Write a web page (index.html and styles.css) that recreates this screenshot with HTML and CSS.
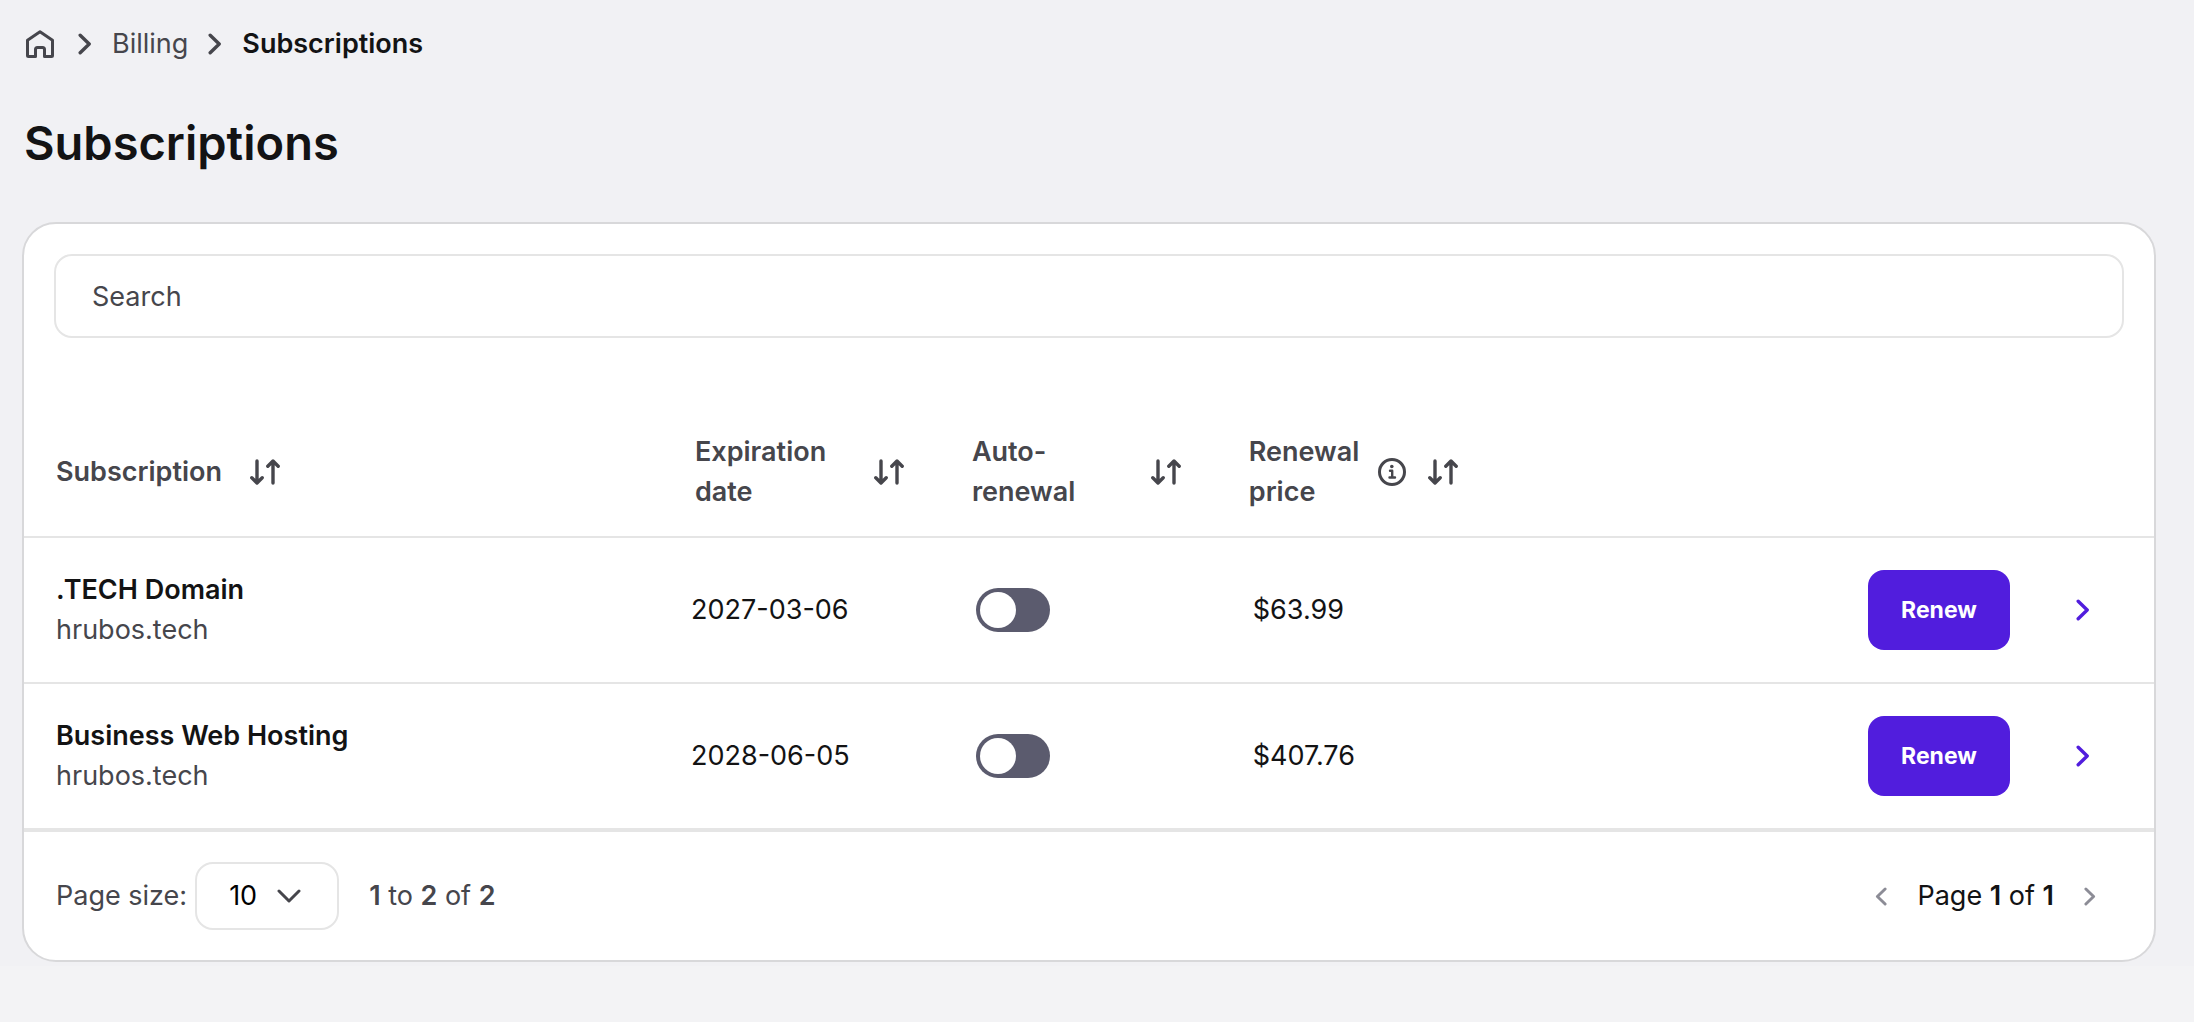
FILE: index.html
```html
<!DOCTYPE html>
<html lang="en">
<head>
<meta charset="utf-8">
<meta name="viewport" content="width=device-width, initial-scale=1">
<title>Subscriptions</title>
<link rel="stylesheet" href="styles.css">
</head>
<body>
<svg class="sprite" aria-hidden="true">
  <symbol id="chevron" viewBox="0 0 14 22"><path stroke-width="3.400" d="M2.200 2.200L11.200 11l-9 8.800"/></symbol>
  <symbol id="sort" viewBox="0 0 30 26"><path stroke-width="3.400" d="M7 2v21M1.800 18.800L7 24l5.200-5.200M23 24V3M17.800 7.200L23 2l5.200 5.200"/></symbol>
</svg>
<main class="page">
  <nav class="crumbs" aria-label="Breadcrumb">
    <a class="crumb-home" href="#" aria-label="Home">
      <svg class="icon-home" viewBox="0 0 28 28"><path d="M1.500 10.200L14 1.800l12.500 8.400V25.500q0 1-1 1H18.500V19.500q0-2-2-2h-5q-2 0-2 2v7H2.500q-1 0-1-1z"/></svg>
    </a>
    <svg class="icon-chevron"><use href="#chevron"/></svg>
    <a href="#">Billing</a>
    <svg class="icon-chevron"><use href="#chevron"/></svg>
    <span class="crumb-current" aria-current="page">Subscriptions</span>
  </nav>
  <h1 class="title">Subscriptions</h1>

  <section class="card">
    <div class="search">
      <input class="search-input" type="search" placeholder="Search" aria-label="Search">
    </div>
    <table class="table">
      <colgroup>
        <col class="col-name"><col class="col-data"><col class="col-data"><col class="col-data"><col>
      </colgroup>
      <thead>
        <tr>
          <th scope="col"><button class="sort sort-start" type="button"><span>Subscription</span><svg class="icon-sort"><use href="#sort"/></svg></button></th>
          <th scope="col"><button class="sort" type="button"><span class="sort-label">Expiration<br>date</span><svg class="icon-sort"><use href="#sort"/></svg></button></th>
          <th scope="col"><button class="sort" type="button"><span class="sort-label">Auto-<br>renewal</span><svg class="icon-sort"><use href="#sort"/></svg></button></th>
          <th scope="col"><button class="sort" type="button"><span class="sort-label">Renewal<br>price</span>
            <svg class="icon-info" viewBox="0 0 28 28"><circle cx="14" cy="14" r="12.500"/><path stroke-width="2.400" d="M12 12.800h2.200V19M11.500 19.500h5.500"/><circle class="dot" cx="13.800" cy="8.500" r="1.800"/></svg>
            <svg class="icon-sort"><use href="#sort"/></svg></button></th>
          <td></td>
        </tr>
      </thead>
      <tbody>
        <tr>
          <td><div class="name">.TECH Domain</div><div class="domain">hrubos.tech</div></td>
          <td class="date">2027-03-06</td>
          <td class="inset"><input class="toggle" type="checkbox" role="switch" aria-label="Auto-renewal for .TECH Domain"></td>
          <td class="inset">$63.99</td>
          <td><div class="actions"><button class="renew" type="button">Renew</button><a class="open" href="#" aria-label="Open .TECH Domain"><svg class="icon-chevron"><use href="#chevron"/></svg></a></div></td>
        </tr>
        <tr>
          <td><div class="name">Business Web Hosting</div><div class="domain">hrubos.tech</div></td>
          <td class="date">2028-06-05</td>
          <td class="inset"><input class="toggle" type="checkbox" role="switch" aria-label="Auto-renewal for Business Web Hosting"></td>
          <td class="inset">$407.76</td>
          <td><div class="actions"><button class="renew" type="button">Renew</button><a class="open" href="#" aria-label="Open Business Web Hosting"><svg class="icon-chevron"><use href="#chevron"/></svg></a></div></td>
        </tr>
      </tbody>
    </table>
    <footer class="footer">
      <label class="size-label" for="page-size">Page size:</label>
      <div class="size">
        <select class="size-select" id="page-size"><option>10</option><option>25</option><option>50</option></select>
        <svg class="icon-down" viewBox="0 0 24 14"><path d="M2 2l10 10L22 2"/></svg>
      </div>
      <div class="range"><b>1</b> to <b>2</b> of <b>2</b></div>
      <div class="pager">
        <button class="pager-button" type="button" aria-label="Previous page" disabled><svg class="icon-small flip"><use href="#chevron"/></svg></button>
        <span>Page <b>1</b> of <b>1</b></span>
        <button class="pager-button" type="button" aria-label="Next page" disabled><svg class="icon-small"><use href="#chevron"/></svg></button>
      </div>
    </footer>
  </section>
</main>
</body>
</html>
```
FILE: styles.css
```css
:root {
  --ink: #131314;
  --muted: #46464c;
  --line: #e5e5e5;
  --accent: #511ddd;
}

* { box-sizing: border-box; }

body {
  margin: 0;
  background: #f3f3f5;
  color: var(--ink);
  font: 27px/40px Inter, "Open Sans", sans-serif;
}

button, input, select { font: inherit; color: inherit; }
button { border: 0; padding: 0; background: none; cursor: pointer; }
a { color: inherit; text-decoration: none; }
b { font-weight: 600; }

svg {
  display: block;
  flex: none;
  fill: none;
  stroke: currentColor;
  stroke-width: 3;
  stroke-linecap: round;
  stroke-linejoin: round;
}

.sprite { display: none; }
.icon-home { width: 28px; height: 28px; }
.icon-chevron { width: 14px; height: 22px; }
.icon-sort { width: 30px; height: 26px; }
.icon-info { width: 28px; height: 28px; margin-left: auto; }
.icon-info .dot { fill: currentColor; stroke: none; }
.icon-down { width: 24px; height: 14px; }
.icon-small { width: 12px; height: 19px; }
.flip { transform: scaleX(-1); }

.page {
  background: #f1f1f4;
  padding: 24px 38px 4px 22px;
}

.crumbs {
  display: flex;
  align-items: center;
  gap: 20px;
  padding-left: 4px;
  color: var(--muted);
}
.crumb-home { padding-right: 4px; }
.crumb-current { color: var(--ink); font-weight: 600; }

.title {
  margin: 48px 0;
  padding-left: 2px;
  font-size: 47px;
  line-height: 62px;
  font-weight: 600;
}

.card {
  background: #fff;
  border: 2px solid #d8d8da;
  border-radius: 34px;
}

.search { padding: 30px 30px 70px; }
.search-input {
  display: block;
  width: 100%;
  height: 84px;
  padding: 0 36px;
  border: 2px solid var(--line);
  border-radius: 18px;
  background: none;
  appearance: none;
}
.search-input::placeholder { color: var(--muted); opacity: 1; }

.table {
  width: 100%;
  table-layout: fixed;
  border-collapse: separate;
  border-spacing: 0;
}
.col-name { width: 30%; }
.col-data { width: 13%; }
.table th, .table td {
  padding: 32px;
  text-align: left;
  border-bottom: 2px solid var(--line);
}
.table thead th { padding: 24px 36px 24px 32px; }
.table thead td { padding: 0; }
.table tbody td { height: 146px; }
.table tbody td:last-child { padding: 0 60px 0 0; }
.table tbody td.date { padding-left: 28px; }
.table tbody td.inset { padding-left: 36px; }
.table tbody tr:last-child td { height: 148px; border-bottom-width: 4px; }

.sort {
  display: flex;
  align-items: center;
  justify-content: space-between;
  gap: 22px;
  width: 100%;
  color: var(--muted);
  font-weight: 600;
  text-align: left;
}
.sort-start { justify-content: flex-start; gap: 28px; }
.sort-label { margin-right: -8px; }

.name { font-weight: 600; }
.domain { color: var(--muted); }

.toggle {
  display: block;
  width: 74px;
  height: 44px;
  margin: 0;
  padding: 4px;
  border-radius: 22px;
  background: #5b5b6e;
  appearance: none;
  cursor: pointer;
}
.toggle::before {
  content: "";
  display: block;
  width: 36px;
  height: 36px;
  border-radius: 50%;
  background: #fff;
}
.toggle:checked { background: var(--accent); }
.toggle:checked::before { margin-left: auto; }

.actions {
  display: flex;
  align-items: center;
  justify-content: flex-end;
  gap: 62px;
}
.renew {
  width: 142px;
  height: 80px;
  border-radius: 16px;
  background: var(--accent);
  color: #fff;
  font-size: 23px;
  font-weight: 700;
}
.open { padding: 4px; color: var(--accent); }

.footer {
  display: flex;
  align-items: center;
  gap: 8px;
  padding: 30px 58px 30px 32px;
  color: var(--muted);
}
.size { display: grid; align-items: center; }
.size > * { grid-area: 1 / 1; }
.size-select {
  width: 144px;
  height: 68px;
  padding: 0 32px;
  border: 2px solid var(--line);
  border-radius: 18px;
  background: #fff;
  color: #000;
  appearance: none;
}
.icon-down {
  justify-self: end;
  margin-right: 38px;
  pointer-events: none;
}
.range { padding-left: 22px; }
.pager {
  display: flex;
  align-items: center;
  gap: 30px;
  margin-left: auto;
  color: var(--ink);
}
.pager-button { color: #8c8c96; }
```
